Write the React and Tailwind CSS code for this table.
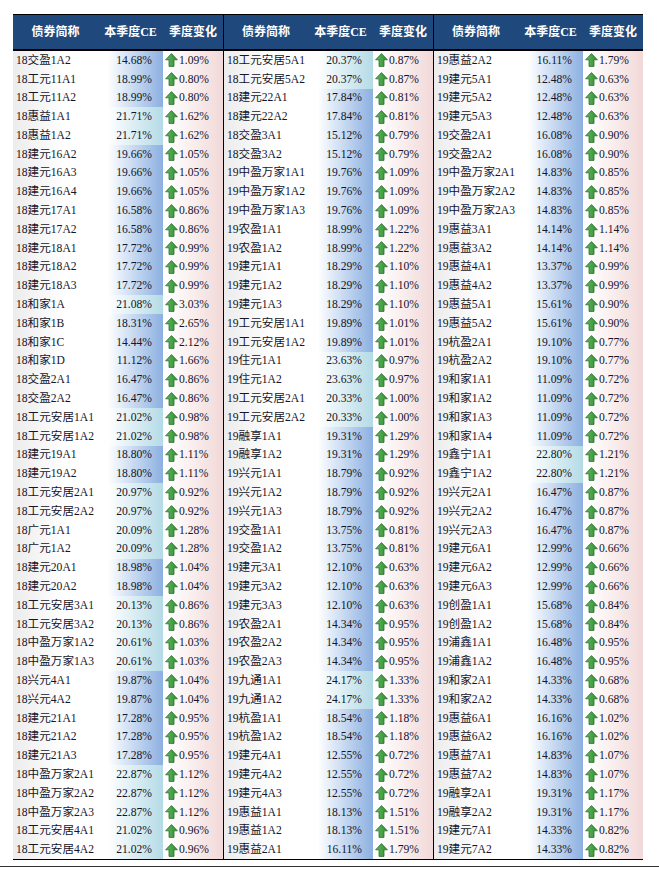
import React from "react";

const raw = [
  [
    "18交盈1A2 14.68 1.09","18工元11A1 18.99 0.80","18工元11A2 18.99 0.80","18惠益1A1 21.71 1.62","18惠益1A2 21.71 1.62",
    "18建元16A2 19.66 1.05","18建元16A3 19.66 1.05","18建元16A4 19.66 1.05","18建元17A1 16.58 0.86","18建元17A2 16.58 0.86",
    "18建元18A1 17.72 0.99","18建元18A2 17.72 0.99","18建元18A3 17.72 0.99","18和家1A 21.08 3.03","18和家1B 18.31 2.65",
    "18和家1C 14.44 2.12","18和家1D 11.12 1.66","18交盈2A1 16.47 0.86","18交盈2A2 16.47 0.86","18工元安居1A1 21.02 0.98",
    "18工元安居1A2 21.02 0.98","18建元19A1 18.80 1.11","18建元19A2 18.80 1.11","18工元安居2A1 20.97 0.92","18工元安居2A2 20.97 0.92",
    "18广元1A1 20.09 1.28","18广元1A2 20.09 1.28","18建元20A1 18.98 1.04","18建元20A2 18.98 1.04","18工元安居3A1 20.13 0.86",
    "18工元安居3A2 20.13 0.86","18中盈万家1A2 20.61 1.03","18中盈万家1A3 20.61 1.03","18兴元4A1 19.87 1.04","18兴元4A2 19.87 1.04",
    "18建元21A1 17.28 0.95","18建元21A2 17.28 0.95","18建元21A3 17.28 0.95","18中盈万家2A1 22.87 1.12","18中盈万家2A2 22.87 1.12",
    "18中盈万家2A3 22.87 1.12","18工元安居4A1 21.02 0.96","18工元安居4A2 21.02 0.96",
  ],
  [
    "18工元安居5A1 20.37 0.87","18工元安居5A2 20.37 0.87","18建元22A1 17.84 0.81","18建元22A2 17.84 0.81","18交盈3A1 15.12 0.79",
    "18交盈3A2 15.12 0.79","19中盈万家1A1 19.76 1.09","19中盈万家1A2 19.76 1.09","19中盈万家1A3 19.76 1.09","19农盈1A1 18.99 1.22",
    "19农盈1A2 18.99 1.22","19建元1A1 18.29 1.10","19建元1A2 18.29 1.10","19建元1A3 18.29 1.10","19工元安居1A1 19.89 1.01",
    "19工元安居1A2 19.89 1.01","19住元1A1 23.63 0.97","19住元1A2 23.63 0.97","19工元安居2A1 20.33 1.00","19工元安居2A2 20.33 1.00",
    "19融享1A1 19.31 1.29","19融享1A2 19.31 1.29","19兴元1A1 18.79 0.92","19兴元1A2 18.79 0.92","19兴元1A3 18.79 0.92",
    "19交盈1A1 13.75 0.81","19交盈1A2 13.75 0.81","19建元3A1 12.10 0.63","19建元3A2 12.10 0.63","19建元3A3 12.10 0.63",
    "19农盈2A1 14.34 0.95","19农盈2A2 14.34 0.95","19农盈2A3 14.34 0.95","19九通1A1 24.17 1.33","19九通1A2 24.17 1.33",
    "19杭盈1A1 18.54 1.18","19杭盈1A2 18.54 1.18","19建元4A1 12.55 0.72","19建元4A2 12.55 0.72","19建元4A3 12.55 0.72",
    "19惠益1A1 18.13 1.51","19惠益1A2 18.13 1.51","19惠益2A1 16.11 1.79",
  ],
  [
    "19惠益2A2 16.11 1.79","19建元5A1 12.48 0.63","19建元5A2 12.48 0.63","19建元5A3 12.48 0.63","19交盈2A1 16.08 0.90",
    "19交盈2A2 16.08 0.90","19中盈万家2A1 14.83 0.85","19中盈万家2A2 14.83 0.85","19中盈万家2A3 14.83 0.85","19惠益3A1 14.14 1.14",
    "19惠益3A2 14.14 1.14","19惠益4A1 13.37 0.99","19惠益4A2 13.37 0.99","19惠益5A1 15.61 0.90","19惠益5A2 15.61 0.90",
    "19杭盈2A1 19.10 0.77","19杭盈2A2 19.10 0.77","19和家1A1 11.09 0.72","19和家1A2 11.09 0.72","19和家1A3 11.09 0.72",
    "19和家1A4 11.09 0.72","19鑫宁1A1 22.80 1.21","19鑫宁1A2 22.80 1.21","19兴元2A1 16.47 0.87","19兴元2A2 16.47 0.87",
    "19兴元2A3 16.47 0.87","19建元6A1 12.99 0.66","19建元6A2 12.99 0.66","19建元6A3 12.99 0.66","19创盈1A1 15.68 0.84",
    "19创盈1A2 15.68 0.84","19浦鑫1A1 16.48 0.95","19浦鑫1A2 16.48 0.95","19和家2A1 14.33 0.68","19和家2A2 14.33 0.68",
    "19惠益6A1 16.16 1.02","19惠益6A2 16.16 1.02","19惠益7A1 14.83 1.07","19惠益7A2 14.83 1.07","19融享2A1 19.31 1.17",
    "19融享2A2 19.31 1.17","19建元7A1 14.33 0.82","19建元7A2 14.33 0.82",
  ],
];

const groups = raw.map((g) =>
  g.map((s) => {
    const [name, ce, chg] = s.split(" ");
    return { name, ce, chg };
  })
);

function UpArrow() {
  return (
    <svg width="13" height="14" viewBox="0 0 13 14" className="shrink-0">
      <defs>
        <linearGradient id="ga" x1="0" y1="0" x2="1" y2="0">
          <stop offset="0" stopColor="#63b863" />
          <stop offset="1" stopColor="#2f8f2f" />
        </linearGradient>
      </defs>
      <polygon
        points="6.5,0.6 12.4,6.8 9,6.8 9,13.4 4,13.4 4,6.8 0.6,6.8"
        fill="url(#ga)"
        stroke="#2b6e2b"
        strokeWidth="0.8"
        strokeLinejoin="round"
      />
    </svg>
  );
}

function Group({ rows, first }) {
  return (
    <div className={first ? "flex w-[210px] flex-col" : "flex w-[210px] flex-col border-l border-black"}>
      <div className="flex h-[36px] items-center border-b-2 border-black bg-[#1f497d] text-[12px] font-bold text-white">
        <div className="flex-1 text-center">债券简称</div>
        <div className="w-[65px] text-center">本季度CE</div>
        <div className="w-[60px] text-center">季度变化</div>
      </div>
      {rows.map((r, i) => {
        const teal = parseFloat(r.ce) >= 20;
        return (
          <div key={i} className="flex h-[18.8px] items-center text-[11.6px] text-[#14142a]">
            <div className="flex h-full flex-1 items-center bg-linear-to-r from-[#ececec] via-white via-60% to-white pl-[3px] whitespace-nowrap">
              {r.name}
            </div>
            <div
              className={
                teal
                  ? "flex h-full w-[65px] items-center justify-end bg-linear-to-r from-white from-15% to-[#b4dbe6] pr-[11px]"
                  : "flex h-full w-[65px] items-center justify-end bg-linear-to-r from-white from-15% to-[#8cb0e0] pr-[11px]"
              }
            >
              {r.ce}%
            </div>
            <div className="flex h-full w-[60px] items-center bg-linear-to-r from-white from-10% to-[#f2d8d8] pl-[2px]">
              <UpArrow />
              <span className="ml-[1px]">{r.chg}%</span>
            </div>
          </div>
        );
      })}
    </div>
  );
}

export default function App() {
  return (
    <div
      className="h-[870px] w-[659px] bg-white"
      style={{ fontFamily: '"Liberation Serif", "Noto Sans CJK SC", serif' }}
    >
      <div className="flex flex-col pt-[14px]">
        <div className="ml-[13px] flex w-[630px] border-y border-black">
          {groups.map((g, i) => (
            <Group key={i} rows={g} first={i === 0} />
          ))}
        </div>
        <div className="mt-[6px] h-[1px] w-full bg-[#333]" />
      </div>
    </div>
  );
}
